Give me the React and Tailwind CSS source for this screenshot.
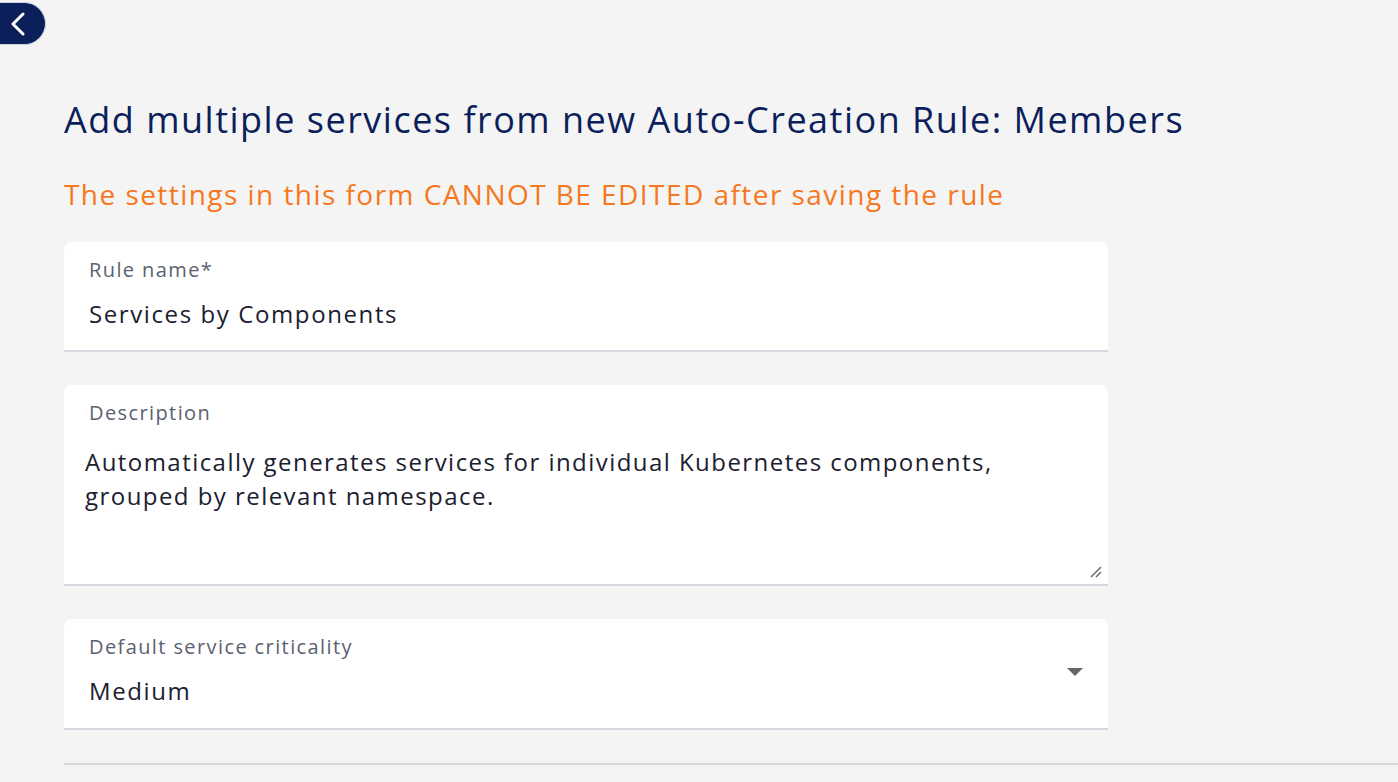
const font = { fontFamily: '"Open Sans", Lato, sans-serif' }

function Field({ label, children, className = '' }) {
  return (
    <div className={`bg-white rounded-t-[8px] border-b-2 border-[#d6d9df] ${className}`}>
      <div className="pl-[25px] pt-[15px] text-[20px] leading-[26px] tracking-[1.4px] text-[#5b6170]">{label}</div>
      {children}
    </div>
  )
}

export default function App() {
  return (
    <div className="min-h-screen w-full bg-[#f4f4f4] text-[#1b2030]" style={font}>
      <div className="h-[46px] pt-[2px]">
        <button className="w-[46px] h-[43px] bg-[#0b1f5b] rounded-r-full rounded-l-[3px] flex items-center pl-[10px] border border-[#cdd3e3] border-l-0">
          <svg width="16" height="24" viewBox="0 0 16 24">
            <path d="M13 2L3 12L13 22" fill="none" stroke="#fff" strokeWidth="3" strokeLinecap="round" strokeLinejoin="round" />
          </svg>
        </button>
      </div>

      <div className="pl-[64px]">
        <h1 className="mt-[52px] text-[36px] leading-[44px] tracking-[1.5px] text-[#0c1f5b] font-normal">
          Add multiple services from new Auto-Creation Rule: Members
        </h1>
        <p className="mt-[34px] text-[28px] leading-[36px] tracking-[1.45px] text-[#f6781e]">
          The settings in this form CANNOT BE EDITED after saving the rule
        </p>

        <div className="w-[1044px] mt-[30px] flex flex-col gap-[33px]">
          <Field label="Rule name*" className="h-[110px]">
            <div className="pl-[25px] pt-[17px] text-[24px] leading-[28px] tracking-[1.6px]">Services by Components</div>
          </Field>

          <Field label="Description" className="h-[201px] relative">
            <div className="pl-[21px] pt-[19px] pr-[60px] text-[24px] leading-[34px] tracking-[1.45px]">
              Automatically generates services for individual Kubernetes components, grouped by relevant namespace.
            </div>
            <svg className="absolute right-[6px] bottom-[6px]" width="12" height="12" viewBox="0 0 12 12">
              <path d="M1 11L11 1M6 11L11 6" stroke="#6b6b6b" strokeWidth="1.5" />
            </svg>
          </Field>

          <Field label="Default service criticality" className="h-[111px] relative">
            <div className="pl-[25px] pt-[17px] text-[24px] leading-[28px] tracking-[1.6px]">Medium</div>
            <svg className="absolute right-[25px] top-[49px]" width="16" height="8" viewBox="0 0 16 8">
              <path d="M0 0H16L8 8Z" fill="#666" />
            </svg>
          </Field>
        </div>

        <div className="mt-[33px] h-[2px] bg-[#d6d7dc]" />
      </div>
    </div>
  )
}
